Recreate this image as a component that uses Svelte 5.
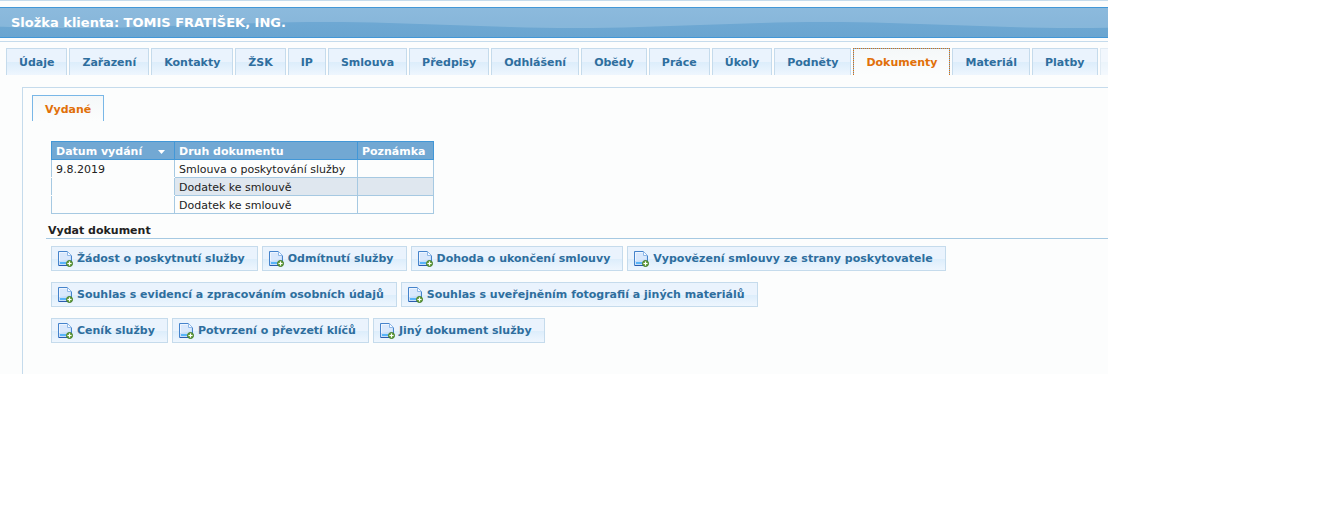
<script>
  const tabs = [
    "Údaje", "Zařazení", "Kontakty", "ŽSK", "IP", "Smlouva", "Předpisy", "Odhlášení",
    "Obědy", "Práce", "Úkoly", "Podněty", "Dokumenty", "Materiál", "Platby"
  ];

  const actions = [
    [
      "Žádost o poskytnutí služby",
      "Odmítnutí služby",
      "Dohoda o ukončení smlouvy",
      "Vypovězení smlouvy ze strany poskytovatele"
    ],
    [
      "Souhlas s evidencí a zpracováním osobních údajů",
      "Souhlas s uveřejněním fotografií a jiných materiálů"
    ],
    ["Ceník služby", "Potvrzení o převzetí klíčů", "Jiný dokument služby"]
  ];

  const documents = [
    { date: "9.8.2019", type: "Smlouva o poskytování služby", note: "" },
    { date: "", type: "Dodatek ke smlouvě", note: "" },
    { date: "", type: "Dodatek ke smlouvě", note: "" }
  ];

  let selected = "Dokumenty";
</script>

<main>
  <header>
    <svg class="wave" aria-hidden="true">
      <defs>
        <pattern id="wave" x="75" width="500" height="29" patternUnits="userSpaceOnUse">
          <path d="M0 0H500V20C410 20 340 14 250 14S90 20 0 20Z" fill="#ffffff" />
        </pattern>
      </defs>
      <rect width="100%" height="29" fill="url(#wave)" />
    </svg>
    <h1>Složka klienta: TOMIS FRATIŠEK, ING.</h1>
  </header>

  <div class="tabs-wrapper">
    <nav>
      {#each tabs as tab}
        <button class="tab" class:active={tab == selected} on:click={() => (selected = tab)}>{tab}</button>
      {/each}
      <span class="tab more"></span>
    </nav>

    <section class="panel">
      <button class="tab inner">Vydané</button>

      <div class="content">
        <table>
          <thead>
            <tr>
              <th class="sorted">Datum vydání <svg width="7" height="4" viewBox="0 0 7 4" aria-hidden="true"><path d="M0 0H7L3.500 4Z" fill="#fff" /></svg></th>
              <th class="type">Druh dokumentu</th>
              <th class="note">Poznámka</th>
            </tr>
          </thead>
          <tbody>
            {#each documents as doc}
              <tr>
                <td class="date">{doc.date}</td>
                <td>{doc.type}</td>
                <td>{doc.note}</td>
              </tr>
            {/each}
          </tbody>
        </table>

        <h2>Vydat dokument</h2>

        {#each actions as row}
          <div class="actions">
            {#each row as label}
              <button class="action">
                <svg width="16" height="17" viewBox="0 0 16 17" aria-hidden="true">
                  <path d="M1.500 1.500H10.500L14.500 5.500V15.500H1.500Z" fill="#c9dff9" stroke="#4583cb" stroke-linejoin="round" />
                  <path d="M2.500 11V2.500H10" fill="none" stroke="#eef5ff" />
                  <path d="M3 3H10V6H13V9L3 11Z" fill="#d9e8fc" />
                  <path d="M10.500 1.500V5.500H14.500Z" fill="#f8fbff" stroke="#8fb8e8" />
                  <path d="M3 12H9V14H3Z" fill="#58b4f8" />
                  <path d="M2 15.500H10" stroke="#2a5cae" />
                  <circle cx="12.500" cy="13.500" r="3" fill="#76ab4b" stroke="#3f7826" />
                  <path d="M12.500 11.500V15.500M10.500 13.500H14.500" stroke="#fff" />
                </svg>
                {label}
              </button>
            {/each}
          </div>
        {/each}
      </div>
    </section>
  </div>
</main>

<style>
  :global(body) {
    background: #fff;
  }
  main {
    margin-right: 215px;
    border-top: 1px solid #c5dbec;
    background: #fcfdfd;
    color: #222;
    font: 11px/14px Verdana, "DejaVu Sans", sans-serif;
    overflow: hidden;
  }
  header {
    position: relative;
    margin-top: 6px;
    border: 1px solid #4297d7;
    border-width: 1px 0;
    background: linear-gradient(#72abd6, #6aa5d0);
  }
  .wave {
    position: absolute;
    top: 0;
    left: 0;
    width: 100%;
    height: 29px;
    opacity: 0.18;
  }
  h1 {
    position: relative;
    margin: 0;
    padding: 7px 11px 6px;
    color: #fff;
    font-size: 13px;
    line-height: 16px;
  }
  .tabs-wrapper {
    margin-top: 3px;
    border-top: 1px solid #c5dbec;
  }
  nav {
    display: flex;
    gap: 2px;
    padding: 6px 0 0 6px;
    white-space: nowrap;
  }
  button {
    font: inherit;
    font-weight: bold;
    color: #2e6e9e;
    cursor: pointer;
  }
  .tab {
    flex: none;
    box-sizing: border-box;
    height: 27px;
    padding: 1px 12px 0;
    border: 1px solid #c5dbec;
    border-bottom: 0;
    background: linear-gradient(#eaf3fd 50%, #dcedfb 51%, #eef6fe);
  }
  .tab.active {
    border: 1px dotted #e17009;
    border-bottom: 0;
    background: linear-gradient(#f5f8f9, #fcfdfd) padding-box, linear-gradient(#79b7e7, #79b7e7) border-box;
    color: #e17009;
  }
  .tab.inner {
    height: 26px;
    padding-top: 2px;
    border-color: #79b7e7;
    background: linear-gradient(#f5f8f9, #fcfdfd);
    color: #e17009;
  }
  .tab.more {
    opacity: 0.5;
  }
  .panel {
    margin: 12px 0 0 22px;
    padding: 7px 0 20px 9px;
    border: 1px solid #c5dbec;
    border-width: 1px 0 0 1px;
  }
  .content {
    padding: 20px 0 0 14px;
  }
  table {
    margin-left: 5px;
    border-collapse: collapse;
  }
  th,
  td {
    height: 14px;
    padding: 3px 4px 0;
    border: 1px solid #a6c9e2;
    background: #fcfdfd;
    text-align: left;
    line-height: 14px;
  }
  th {
    border-color: #4297d7;
    background: #72a8d3;
    color: #fff;
  }
  .sorted {
    width: 114px;
  }
  .type {
    width: 174px;
  }
  .note {
    width: 67px;
  }
  .sorted svg {
    margin-left: 12px;
    vertical-align: middle;
  }
  tbody tr:nth-child(even) td {
    background: #dfe7ef;
  }
  tbody td.date,
  tbody tr:nth-child(even) td.date {
    border-top-color: #fcfdfd;
    border-bottom-color: #fcfdfd;
    background: #fcfdfd;
  }
  tbody tr:first-child td.date {
    border-top-color: #4297d7;
  }
  tbody tr:last-child td.date {
    border-bottom-color: #a6c9e2;
  }
  h2 {
    margin: 10px 0 7px;
    padding: 0 2px;
    border-bottom: 1px solid #a6c9e2;
    font-size: 11px;
    line-height: 14px;
  }
  .actions {
    display: flex;
    gap: 4px;
    margin: 0 0 11px 5px;
    white-space: nowrap;
  }
  .action {
    display: flex;
    align-items: center;
    gap: 4px;
    height: 25px;
    padding: 0 12px 0 5px;
    border: 1px solid #c5dbec;
    background: linear-gradient(#eaf3fd 50%, #dcedfb 51%, #eef6fe);
  }
</style>
